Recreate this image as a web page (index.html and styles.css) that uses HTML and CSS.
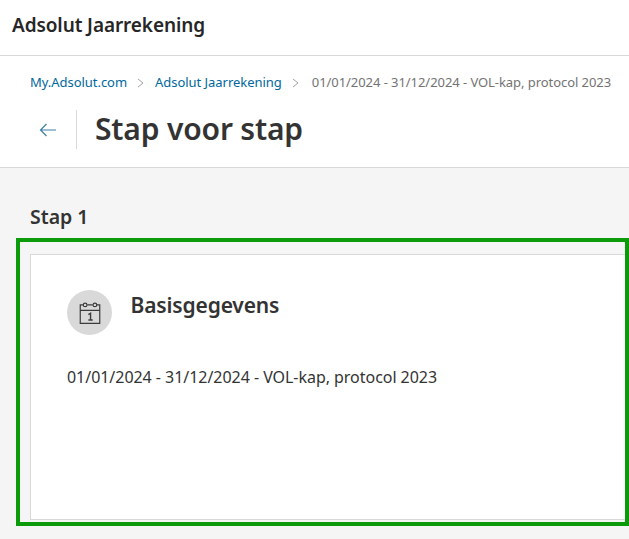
FILE: index.html
```html
<!DOCTYPE html>
<html lang="nl">
<head>
<meta charset="utf-8">
<title>Stap voor stap</title>
<link rel="stylesheet" href="styles.css">
</head>
<body>
<header class="app-bar"><h1 class="app-name">Adsolut Jaarrekening</h1></header>
<section class="page-head">
  <nav class="crumbs">
    <a class="crumb-link">My.Adsolut.com</a>
    <svg class="crumb-sep" width="7" height="10" viewBox="0 0 7 10"><path d="M1 1l5 4-5 4" fill="none" stroke="#a3a3a3" stroke-width="1"/></svg>
    <a class="crumb-link">Adsolut Jaarrekening</a>
    <svg class="crumb-sep crumb-sep-last" width="7" height="10" viewBox="0 0 7 10"><path d="M1 1l5 4-5 4" fill="none" stroke="#a3a3a3" stroke-width="1"/></svg>
    <span class="crumb-current">01/01/2024 - 31/12/2024 - VOL-kap, protocol 2023</span>
  </nav>
  <div class="title-row">
    <div class="back"><svg width="18" height="14" viewBox="0 0 18 14"><path d="M17 7H1.500M7.500 1L1.500 7l6 6" fill="none" stroke="#3f7fa3" stroke-width="1.200"/></svg></div>
    <h2 class="page-title">Stap voor stap</h2>
  </div>
</section>
<main class="content">
  <h3 class="step-title">Stap 1</h3>
  <div class="highlight">
    <article class="card">
      <div class="card-head">
        <div class="icon-circle">
          <svg width="26" height="26" viewBox="0 0 24 24" fill="none" stroke="#3c3c3c" stroke-width="1.100">
            <path d="M5.500 4.500h-2.500v17h18v-17h-2.500M9.500 4.500h5M3 9.500h18"/>
            <circle cx="7.500" cy="4.500" r="1.700"/>
            <circle cx="16.500" cy="4.500" r="1.700"/>
            <path d="M10.500 13.500l2-1.300v6.300M10.500 18.500h4" stroke-width="1.300"/>
          </svg>
        </div>
        <h4 class="card-title">Basisgegevens</h4>
      </div>
      <p class="card-text">01/01/2024 - 31/12/2024 - VOL-kap, protocol 2023</p>
    </article>
  </div>
</main>
</body>
</html>
```
FILE: styles.css
```css
* { box-sizing: border-box; }
html, body { margin: 0; height: 100%; }
body {
  font-family: "Noto Sans", "Open Sans", sans-serif;
  background: #f5f5f5;
  color: #333;
  overflow: hidden;
}
h1, h2, h3, h4, p { margin: 0; }
.app-bar {
  height: 56px;
  background: #fff;
  border-bottom: 1px solid #d9d9d9;
  display: flex;
  align-items: center;
  padding: 0 12px 6px;
}
.app-name { font-size: 19px; font-weight: 600; color: #262626; letter-spacing: -0.1px; }
.page-head {
  height: 112px;
  background: #fff;
  border-bottom: 1px solid #d9d9d9;
  padding: 16px 0 0 30px;
}
.crumbs { display: flex; align-items: center; height: 20px; font-size: 13px; white-space: nowrap; letter-spacing: -0.04px; }
.crumb-link { color: #00689c; }
.crumb-sep { margin: 1px 11px 0 10px; flex: none; }
.crumb-sep-last { margin-right: 13px; }
.crumb-current { color: #737373; letter-spacing: -0.06px; }
.title-row { display: flex; align-items: center; margin-top: 18px; height: 39px; }
.back { width: 47px; height: 39px; border-right: 1px solid #d9d9d9; display: flex; align-items: center; padding-left: 9px; }
.page-title { margin-left: 18px; padding-bottom: 2px; font-size: 30px; font-weight: 600; color: #333; letter-spacing: -0.17px; }
.content { padding-top: 37px; }
.step-title { margin-left: 30px; height: 33px; line-height: 24px; font-size: 19.500px; font-weight: 600; color: #333; }
.highlight {
  margin-left: 16px;
  height: 288px;
  border: 4px solid #0a9a0a;
  padding: 12px 0 2px 10px;
}
.card {
  height: 100%;
  background: #fff;
  border: 1px solid #d9d9d9;
  border-right: 0;
  padding: 35px 0 0 36px;
}
.card-head { display: flex; align-items: flex-start; }
.icon-circle {
  width: 45px;
  height: 45px;
  border-radius: 50%;
  background: #d9d9d9;
  display: flex;
  align-items: center;
  justify-content: center;
}
.card-title { margin-left: 18.500px; font-size: 21px; line-height: 30px; font-weight: 600; color: #333; letter-spacing: -0.15px; }
.card-text { margin-top: 30px; font-size: 16px; line-height: 24px; color: #333; letter-spacing: -0.04px; }
```
